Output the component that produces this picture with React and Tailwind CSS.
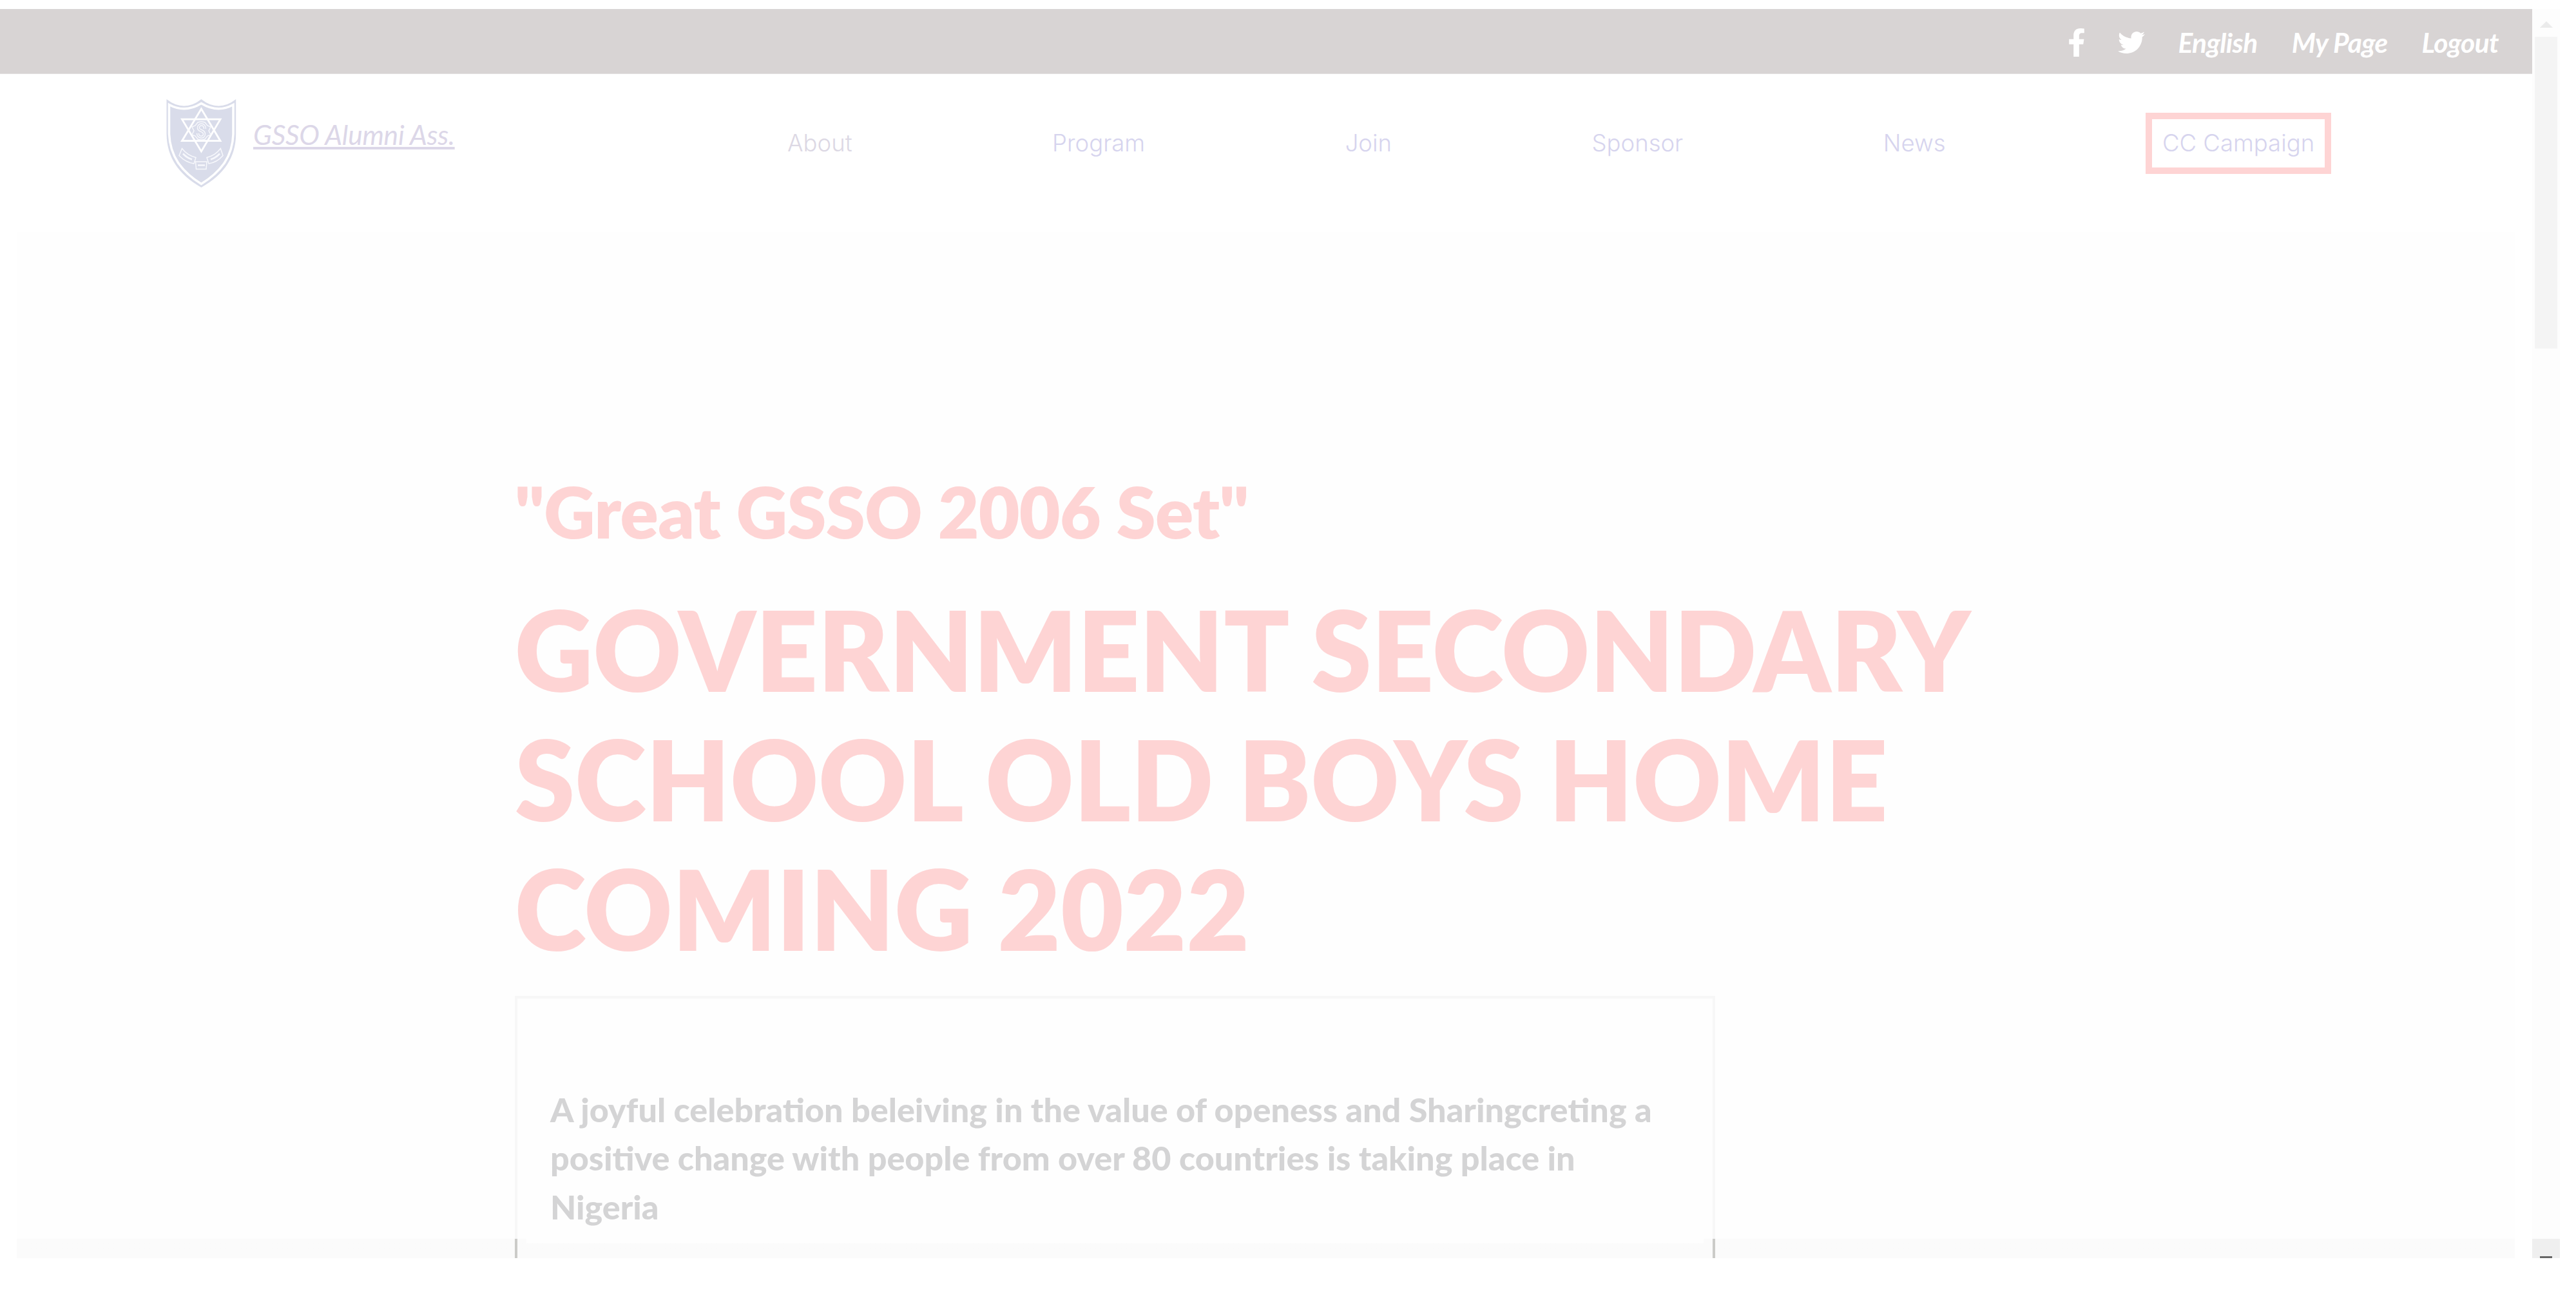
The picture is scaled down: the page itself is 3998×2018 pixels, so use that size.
import { FaFacebookF, FaTwitter } from "react-icons/fa";

const links = ["About", "Program", "Join", "Sponsor", "News"];

function Crest() {
  return (
    <svg className="h-[138px] w-[109px] shrink-0" viewBox="0 0 109 138" fill="none">
      <path d="M0.500 0 Q28 21 54.4 0 Q81 21 108.2 0 V54 C108 92 88 118 54.4 137 C21 118 1 92 0.500 54Z" fill="#d9dcea" />
      <path d="M4.500 8.500 Q29 22 54.400 6.500 Q80 22 104 8.500 V54 C103 88 86 112 54.400 131.500 C23 112 6 88 4.500 54Z" stroke="#fff" strokeWidth="3.500" />
      <g stroke="#fff" strokeWidth="2.800">
        <path d="M54.400 15 L84 64.700 H24.500Z" />
        <path d="M54.400 81 L84 31.200 H24.500Z" />
      </g>
      <g stroke="#f7f8fc" strokeWidth="1.500">
        <path d="M49 36 Q54.400 34 60 36 L64 41 L69 43 L66 49 L69 55 L64 57 L60 62 Q54.400 64 49 62 L45 57 L40 55 L43 49 L40 43 L45 41Z" />
        <path d="M60 46 C60 37 49 38 50 45 C51 50 59 48 59 54 C59 61 49 60 49 53" strokeWidth="4.500" />
        <path d="M60 46 C60 37 49 38 50 45 C51 50 59 48 59 54 C59 61 49 60 49 53" stroke="#d9dcea" />
        <path d="M24.500 76.500 L20 87.500 Q30 98 43 100 L46 90.500 Q33 87.500 24.500 76.500Z M84.300 76.500 L88 87.500 Q79 98 66 100 L63 90.500 Q76 87.500 84.300 76.500Z M45.500 97 H63 L62 108.500 H46.500Z" />
        <path d="M26 84.500 Q32 91 40 93.500 M83 84.500 Q77 91 69 93.500 M49 102.500 H60" strokeWidth="2.600" />
      </g>
    </svg>
  );
}

export default function App() {
  return (
    <div className="flex h-[2018px] w-[3998px] overflow-hidden bg-white pt-[14px] font-[Lato,sans-serif]">
      <main className="h-[1939px] w-[3930px] overflow-hidden">
        <div className="flex h-[101px] items-center justify-end border-b border-[#e4e2e2] bg-[#d8d4d4] pt-[4px] pr-[52px] text-[42.500px] font-bold tracking-[-0.6px] italic text-white">
          <FaFacebookF className="mr-[50px] h-[44px] w-[28px]" />
          <FaTwitter className="mr-[51px] size-[42px]" />
          <div className="flex gap-[53px]">
            <a>English</a>
            <a>My Page</a>
            <a>Logout</a>
          </div>
        </div>

        <header className="flex h-[216px] items-center pl-[258px]">
          <Crest />
          <a className="mb-[29px] ml-[26px] w-[314px] text-[42.500px] leading-[52px] tracking-[-0.25px] whitespace-nowrap italic text-[#dcd7e8] underline decoration-[4px] underline-offset-[3px]">
            GSSO Alumni Ass.
          </a>
          <nav className="mb-[2px] ml-[515px] flex items-center gap-[310.500px] font-[Inter,sans-serif] text-[36.500px] font-light whitespace-nowrap text-[#d6d4ee]">
            {links.map((name) => (
              <a key={name} className="first:text-[#dcd8e4]">
                {name}
              </a>
            ))}
            <a className="flex h-[95px] w-[288px] items-center justify-center border-[10px] border-[#fed4d4]">CC Campaign</a>
          </nav>
        </header>

        <section className="mt-[29px] ml-[26px] h-[1593px] w-[3877px] bg-linear-to-b from-[#fefefe] from-[1563px] to-[#fbfbfb] to-[1563px] pt-[363px] pl-[773px]">
          <h2 className="text-[110px] leading-[140px] font-extrabold tracking-[-0.7px] whitespace-nowrap text-[#fed4d4]">"Great GSSO 2006 Set"</h2>
          <h1 className="mt-[44px] origin-left scale-x-[0.975] text-[172.600px] leading-[201.200px] font-extrabold whitespace-nowrap text-[#fed4d4]">
            GOVERNMENT SECONDARY
            <br />
            SCHOOL OLD BOYS HOME
            <br />
            COMING 2022
          </h1>
          <div className="mt-[35px] h-[408px] w-[1863px]">
            <div className="h-[377px] border-x-4 border-t-4 border-[#f7f7f7] bg-[#fefefe] pt-[135px] pl-[51px]">
              <p className="origin-left scale-x-[1.032] text-[50.500px] leading-[75.700px] font-black whitespace-nowrap text-[#d4d4d5]">
                A joyful celebration beleiving in the value of openess and Sharingcreting a
                <br />
                positive change with people from over 80 countries is taking place in
                <br />
                Nigeria
              </p>
            </div>
            <div className="h-[31px] border-x-4 border-[#cbcbc8] px-[14px]">
              <div className="h-[7px] bg-[#fefefe]" />
            </div>
          </div>
        </section>
      </main>

      <aside className="flex h-[1939px] w-[43px] flex-col items-center bg-[#fdfdfd]">
        <svg className="mt-[19px] h-[10px] w-[20px]" viewBox="0 0 20 10">
          <path d="M10 0 L20 10 H0Z" fill="#ebebeb" />
        </svg>
        <div className="mt-[14px] h-[484px] w-[35px] bg-[#f4f4f4]" />
        <div className="mt-auto flex h-[30px] w-full items-end justify-center bg-[#efefef]">
          <div className="h-[3px] w-[19px] bg-[#666]" />
        </div>
      </aside>
    </div>
  );
}
